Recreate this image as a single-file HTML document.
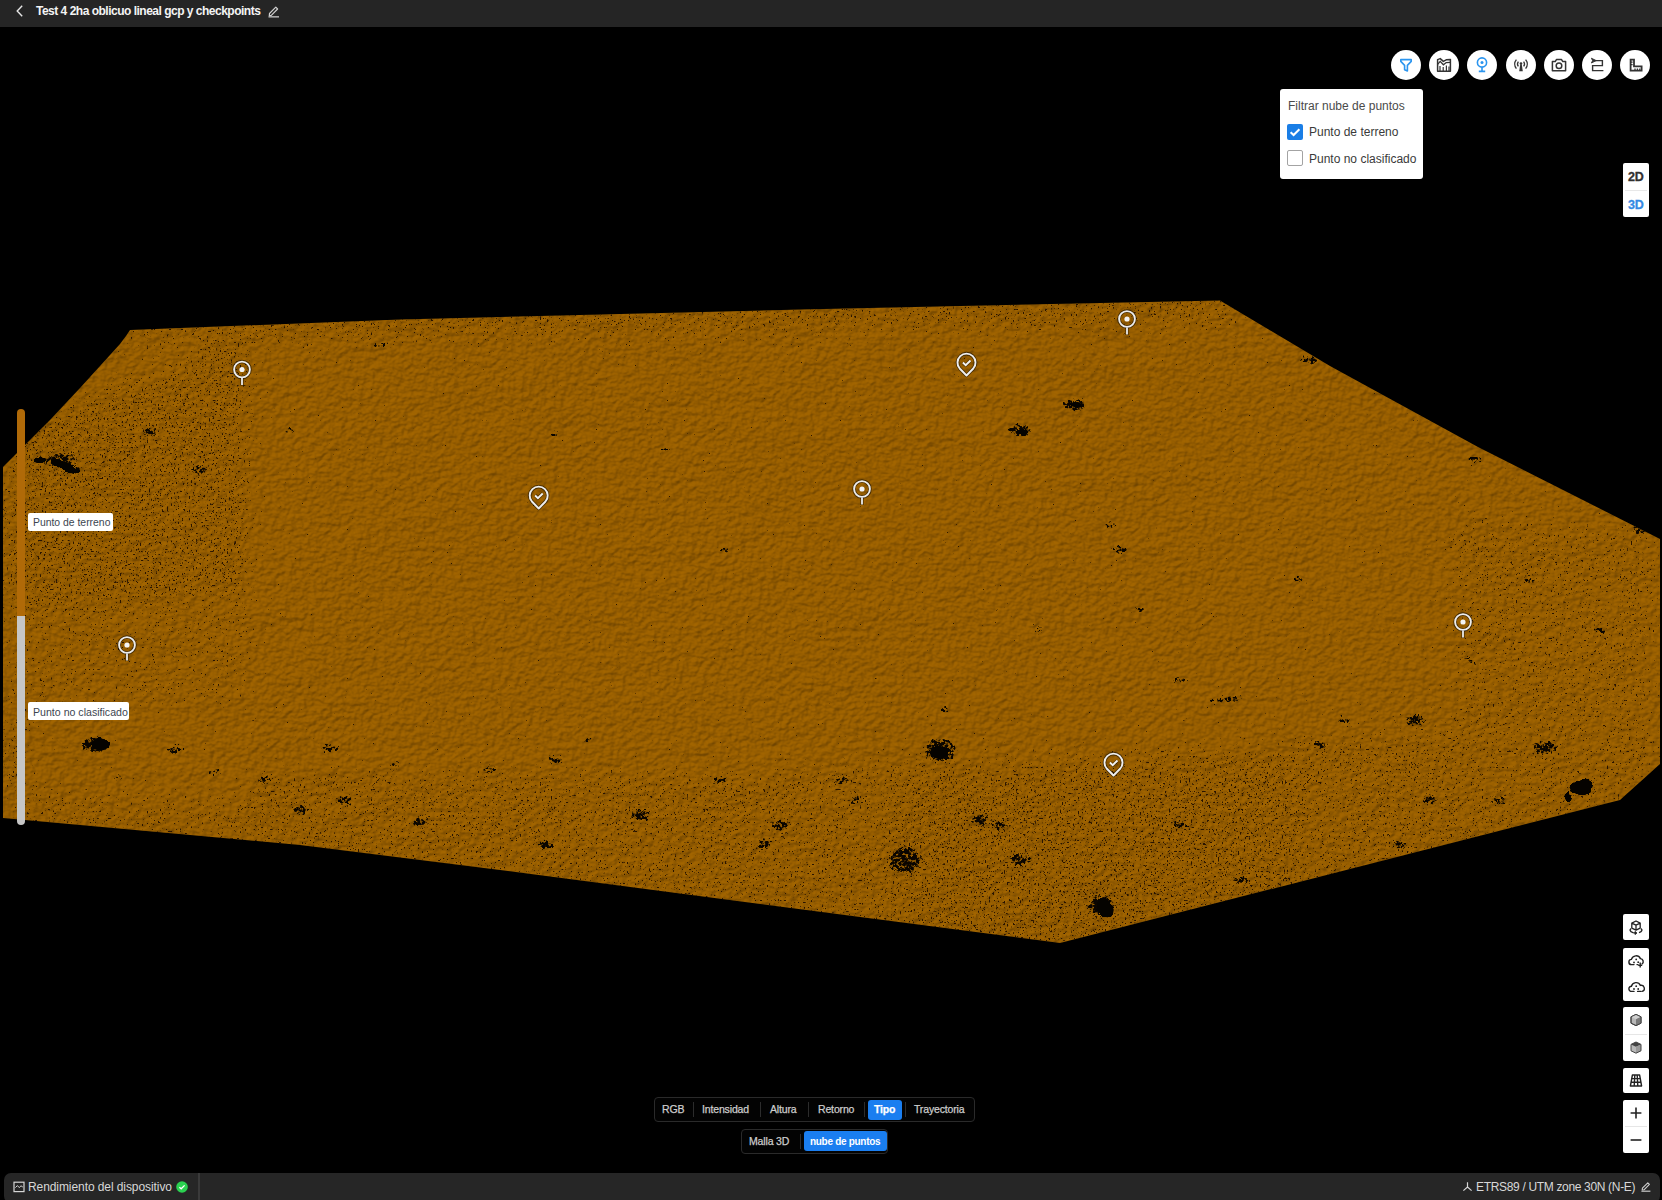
<!DOCTYPE html>
<html><head><meta charset="utf-8">
<style>
*{box-sizing:border-box;margin:0;padding:0}
html,body{width:1662px;height:1200px;overflow:hidden;background:#000;font-family:"Liberation Sans",sans-serif}
.abs{position:absolute}
.m{position:absolute;white-space:nowrap;line-height:1}
#topbar{position:absolute;left:0;top:0;width:1662px;height:27px;background:#252525}
#scene{position:absolute;left:0;top:0}
.tb{position:absolute;top:50px;width:30px;height:30px;border-radius:50%;background:#fff}
.tb svg{position:absolute;left:0;top:0}
#popup{position:absolute;left:1280px;top:89px;width:143px;height:90px;background:#fff;border-radius:3px}
.cb{position:absolute;left:7px;width:16px;height:16px;border-radius:2px}
#dd{position:absolute;left:1623px;top:163px;width:26px;height:54px;background:#fff;border-radius:2px}
.lbl{position:absolute;height:18px;background:#fff;border-radius:2px}
.rc{position:absolute;left:1623px;width:26px;background:#fff;border-radius:2px}
.rc svg{position:absolute;left:0}
#tabs{position:absolute;left:654px;top:1097px;width:321px;height:25px;border:1px solid #2a2a2a;border-radius:4px;background:#030303}
#tabs2{position:absolute;left:741px;top:1129px;width:147px;height:25px;border:1px solid #2a2a2a;border-radius:4px;background:#030303}
.tt{font-size:10.5px;color:#cdcdcd;letter-spacing:-0.15px;margin-top:-1px;margin-left:-1px;-webkit-text-stroke:0.25px}
.sep{position:absolute;width:1px;height:15px;background:#2c2c2c}
#status{position:absolute;left:4px;top:1173px;width:1656px;height:30px;background:#262626;border-radius:7px}
.mk{position:absolute}
</style></head>
<body>
<svg id="scene" width="1662" height="1200" viewBox="0 0 1662 1200">
<defs>
<clipPath id="poly"><polygon points="130,330 400,319.5 800,309.5 1220,300.5 1330,366 1478,447 1660,539 1660,764 1620,800 1060,943 500,870 300,845 3,818 3,467 50,420 80,388 120,344 126,336"/></clipPath>
<filter id="emb" x="0" y="0" width="1662" height="1200" filterUnits="userSpaceOnUse" color-interpolation-filters="sRGB">
  <feTurbulence type="fractalNoise" baseFrequency="0.16 0.2" numOctaves="2" seed="4" result="t1"/>
  <feTurbulence type="fractalNoise" baseFrequency="0.02 0.045" numOctaves="3" seed="9" result="t2"/>
  <feComposite in="t1" in2="t2" operator="arithmetic" k1="0" k2="0.8" k3="0.5" k4="-0.15" result="t"/>
  <feDiffuseLighting in="t" surfaceScale="3" diffuseConstant="1" lighting-color="#ffffff" result="L"><feDistantLight azimuth="235" elevation="50"/></feDiffuseLighting>
  <feColorMatrix in="L" type="matrix" values="0.22 0 0 0 0.42  0.14 0 0 0 0.258  0 0 0 0 0  0 0 0 0 1"/>
</filter>
<filter id="sp" x="0" y="0" width="1662" height="1200" filterUnits="userSpaceOnUse" color-interpolation-filters="sRGB">
  <feGaussianBlur in="SourceGraphic" stdDeviation="10" result="d"/>
  <feTurbulence type="fractalNoise" baseFrequency="0.55" numOctaves="2" seed="7" result="n"/>
  <feComposite in="n" in2="d" operator="arithmetic" k1="0" k2="1" k3="0.5" k4="0" result="s"/>
  <feColorMatrix in="s" type="matrix" values="0 0 0 0 0.16  0 0 0 0 0.08  0 0 0 0 0  12 0 0 0 -8"/>
</filter>
<filter id="bl" x="0" y="0" width="1662" height="1200" filterUnits="userSpaceOnUse" color-interpolation-filters="sRGB">
  <feGaussianBlur in="SourceGraphic" stdDeviation="2.5" result="d"/>
  <feTurbulence type="fractalNoise" baseFrequency="0.35" numOctaves="2" seed="11" result="n"/>
  <feComposite in="n" in2="d" operator="arithmetic" k1="0" k2="1" k3="0.62" k4="0" result="s"/>
  <feColorMatrix in="s" type="matrix" values="0 0 0 0 0.04  0 0 0 0 0.02  0 0 0 0 0  12 0 0 0 -9.4"/>
</filter>
<filter id="bs" x="0" y="0" width="1662" height="1200" filterUnits="userSpaceOnUse" color-interpolation-filters="sRGB">
  <feTurbulence type="fractalNoise" baseFrequency="0.12" numOctaves="2" seed="5" result="n"/>
  <feDisplacementMap in="SourceGraphic" in2="n" scale="6" xChannelSelector="R" yChannelSelector="G" result="dm"/>
  <feColorMatrix in="dm" type="matrix" values="0 0 0 0 0.02  0 0 0 0 0.01  0 0 0 0 0  3 0 0 0 -1.2"/>
</filter>
</defs>
<rect x="0" y="0" width="1662" height="1200" fill="#000"/>
<g clip-path="url(#poly)">
  <rect x="0" y="0" width="1662" height="1200" filter="url(#emb)"/>
  <g filter="url(#sp)">
    <rect x="0" y="0" width="1662" height="1200" fill="rgb(70,70,70)"/>
    <polygon points="0,430 252,330 252,600 0,640" fill="rgb(164,164,164)"/>
    <polygon points="0,600 32,600 32,840 0,840" fill="rgb(160,160,160)"/>
    <polygon points="0,620 252,590 252,700 0,720" fill="rgb(130,130,130)"/>
    <polygon points="250,770 700,770 1300,740 1662,700 1662,1000 250,1000" fill="rgb(150,150,150)"/>
    <polygon points="0,790 250,790 250,1000 0,1000" fill="rgb(138,138,138)"/>
    <polygon points="900,780 1300,760 1300,960 900,960" fill="rgb(166,166,166)"/>
    <polygon points="100,300 1240,280 1240,330 100,350" fill="rgb(150,150,150)"/>
    <polygon points="1450,520 1662,520 1662,820 1450,820" fill="rgb(140,140,140)"/>
  </g>
  <g filter="url(#bl)">
    <rect x="0" y="0" width="1662" height="1200" fill="#000"/>
    <g fill="#fff"><ellipse cx="95" cy="745" rx="16" ry="10"/><ellipse cx="175" cy="750" rx="10" ry="6"/><ellipse cx="215" cy="772" rx="8" ry="5"/><ellipse cx="118" cy="777" rx="6" ry="5"/><ellipse cx="265" cy="780" rx="9" ry="6"/><ellipse cx="330" cy="748" rx="12" ry="6"/><ellipse cx="300" cy="810" rx="10" ry="7"/><ellipse cx="345" cy="800" rx="10" ry="7"/><ellipse cx="395" cy="765" rx="8" ry="5"/><ellipse cx="490" cy="770" rx="9" ry="6"/><ellipse cx="555" cy="760" rx="10" ry="6"/><ellipse cx="590" cy="740" rx="8" ry="5"/><ellipse cx="640" cy="815" rx="12" ry="8"/><ellipse cx="720" cy="780" rx="10" ry="6"/><ellipse cx="780" cy="825" rx="12" ry="7"/><ellipse cx="840" cy="780" rx="10" ry="6"/><ellipse cx="855" cy="800" rx="8" ry="6"/><ellipse cx="905" cy="860" rx="18" ry="16"/><ellipse cx="940" cy="750" rx="18" ry="14"/><ellipse cx="945" cy="710" rx="8" ry="5"/><ellipse cx="1000" cy="825" rx="10" ry="7"/><ellipse cx="1100" cy="905" rx="14" ry="12"/><ellipse cx="1180" cy="825" rx="10" ry="6"/><ellipse cx="1220" cy="700" rx="16" ry="4"/><ellipse cx="1320" cy="745" rx="9" ry="6"/><ellipse cx="1345" cy="720" rx="9" ry="5"/><ellipse cx="1415" cy="720" rx="12" ry="8"/><ellipse cx="1430" cy="800" rx="10" ry="6"/><ellipse cx="1545" cy="748" rx="14" ry="9"/><ellipse cx="1400" cy="845" rx="10" ry="6"/><ellipse cx="60" cy="460" rx="18" ry="8"/><ellipse cx="290" cy="430" rx="8" ry="4"/><ellipse cx="380" cy="345" rx="10" ry="4"/><ellipse cx="555" cy="433" rx="8" ry="4"/><ellipse cx="665" cy="450" rx="6" ry="4"/><ellipse cx="1020" cy="430" rx="14" ry="8"/><ellipse cx="1075" cy="405" rx="14" ry="8"/><ellipse cx="1310" cy="360" rx="12" ry="6"/><ellipse cx="1475" cy="460" rx="10" ry="5"/><ellipse cx="1640" cy="530" rx="10" ry="6"/><ellipse cx="1120" cy="550" rx="10" ry="6"/><ellipse cx="1110" cy="525" rx="8" ry="5"/><ellipse cx="725" cy="550" rx="7" ry="5"/><ellipse cx="1140" cy="610" rx="8" ry="5"/><ellipse cx="1040" cy="630" rx="8" ry="5"/><ellipse cx="1180" cy="680" rx="10" ry="5"/><ellipse cx="1300" cy="580" rx="9" ry="5"/><ellipse cx="1530" cy="580" rx="10" ry="5"/><ellipse cx="1600" cy="630" rx="9" ry="5"/><ellipse cx="150" cy="432" rx="10" ry="6"/><ellipse cx="200" cy="470" rx="10" ry="6"/><ellipse cx="32" cy="520" rx="7" ry="5"/><ellipse cx="420" cy="822" rx="10" ry="7"/><ellipse cx="545" cy="845" rx="10" ry="7"/><ellipse cx="980" cy="820" rx="10" ry="8"/><ellipse cx="1020" cy="860" rx="12" ry="8"/><ellipse cx="1500" cy="800" rx="10" ry="6"/><ellipse cx="1240" cy="880" rx="10" ry="6"/><ellipse cx="764" cy="844" rx="10" ry="7"/><ellipse cx="1470" cy="662" rx="9" ry="5"/><ellipse cx="1232" cy="699" rx="14" ry="5"/></g>
  </g>
  <g filter="url(#bs)">
    <rect x="0" y="0" width="1662" height="1200" fill="#000"/>
    <g fill="#fff"><ellipse cx="65" cy="466" rx="16" ry="4" transform="rotate(22 65 466)"/><ellipse cx="40" cy="460" rx="5" ry="3" transform="rotate(0 40 460)"/><ellipse cx="1105" cy="908" rx="8" ry="11" transform="rotate(-25 1105 908)"/><ellipse cx="1582" cy="787" rx="12" ry="7" transform="rotate(-10 1582 787)"/><ellipse cx="1568" cy="797" rx="3" ry="5" transform="rotate(0 1568 797)"/><ellipse cx="940" cy="752" rx="9" ry="7" transform="rotate(0 940 752)"/><ellipse cx="100" cy="744" rx="9" ry="6" transform="rotate(0 100 744)"/><ellipse cx="1076" cy="404" rx="6" ry="3" transform="rotate(0 1076 404)"/><ellipse cx="1022" cy="432" rx="6" ry="3" transform="rotate(0 1022 432)"/></g>
  </g>
</g>
</svg>

<div id="topbar">
  <svg class="abs" style="left:14px;top:4px" width="12" height="14" viewBox="0 0 12 14"><path d="M8.2 1.8 L3.2 7 L8.2 12.2" fill="none" stroke="#e6e6e6" stroke-width="1.4"/></svg>
  <span class="m" id="title" style="left:36px;top:5px;font-size:12px;font-weight:bold;color:#f4f4f4;letter-spacing:-0.5px">Test 4 2ha oblicuo lineal gcp y checkpoints</span>
  <svg class="abs" style="left:266px;top:4px" width="14" height="14" viewBox="0 0 14 14"><path d="M3.5 9.5 L9.8 3.2 L11.6 5 L5.3 11.3 L3.3 11.6 Z" fill="none" stroke="#d0d0d0" stroke-width="1.2" stroke-linejoin="round"/><rect x="2.5" y="12.2" width="10.5" height="1.3" fill="#c8c8c8"/></svg>
</div>

<!-- markers -->
<svg class="mk" style="left:0;top:0" width="1662" height="1200" viewBox="0 0 1662 1200">
  <defs>
    <g id="pin">
      <circle cx="0" cy="0" r="8" fill="none" stroke="#000" stroke-opacity="0.5" stroke-width="3.6"/>
      <line x1="0" y1="8" x2="0" y2="16" stroke="#000" stroke-opacity="0.5" stroke-width="3.4"/>
      <circle cx="0" cy="0" r="7.9" fill="none" stroke="#ececec" stroke-width="1.9"/>
      <circle cx="0" cy="0" r="2.6" fill="#f4f4f4"/>
      <line x1="0" y1="8.5" x2="0" y2="15.6" stroke="#ececec" stroke-width="1.8"/>
    </g>
    <g id="chk">
      <path d="M0 12 L-6.8 5 A9 9 0 1 1 6.8 5 Z" fill="none" stroke="#000" stroke-opacity="0.5" stroke-width="3.6" stroke-linejoin="round"/>
      <path d="M0 12 L-6.8 5 A9 9 0 1 1 6.8 5 Z" fill="none" stroke="#eeeeee" stroke-width="1.9" stroke-linejoin="round"/>
      <path d="M-3.6 -1 L-0.8 1.6 L4 -3" fill="none" stroke="#000" stroke-opacity="0.4" stroke-width="3.4"/>
      <path d="M-3.6 -1 L-0.8 1.6 L4 -3" fill="none" stroke="#f2f2f2" stroke-width="1.9"/>
    </g>
  </defs>
  <use href="#pin" x="242" y="369.5"/>
  <use href="#pin" x="1127" y="319"/>
  <use href="#pin" x="862" y="489"/>
  <use href="#pin" x="127" y="645"/>
  <use href="#pin" x="1463" y="622"/>
  <use href="#chk" x="966.5" y="363.5"/>
  <use href="#chk" x="538.7" y="496.5"/>
  <use href="#chk" x="1113.5" y="763.5"/>
</svg>

<!-- toolbar -->
<div class="tb" style="left:1391px"><svg width="30" height="30" viewBox="0 0 30 30"><path d="M9.8 9.6 H20.2 V11.4 L16.4 15.4 V21 L13.6 19.8 V15.4 L9.8 11.4 Z" fill="none" stroke="#2b95ef" stroke-width="1.6" stroke-linejoin="round"/></svg></div>
<div class="tb" style="left:1429.2px"><svg width="30" height="30" viewBox="0 0 30 30"><path d="M8.6 21.2 V9.6 L11.2 8.6 L14.4 11.4 L17.2 9.8 L21.4 9.4 V21.2 Z" fill="none" stroke="#333" stroke-width="1.5" stroke-linejoin="round"/><path d="M8.6 14.4 L11.2 11.4 L14.4 14.8 L17.2 12.6 L21.4 12.4" fill="none" stroke="#333" stroke-width="1.3"/><path d="M11 21 V16 M14.2 21 V17 M17.4 21 V15.6 M20 21 V16.4" stroke="#333" stroke-width="1.2"/></svg></div>
<div class="tb" style="left:1467.4px"><svg width="30" height="30" viewBox="0 0 30 30"><circle cx="15" cy="12.5" r="4.6" fill="none" stroke="#2b95ef" stroke-width="1.6"/><circle cx="15" cy="12.5" r="1.5" fill="#2b95ef"/><path d="M15 17.2 V21 M11.8 21.4 H18.2" stroke="#2b95ef" stroke-width="1.6"/></svg></div>
<div class="tb" style="left:1505.5px"><svg width="30" height="30" viewBox="0 0 30 30"><path d="M10.4 9.6 A7 7 0 0 0 10.4 18.6 M19.6 9.6 A7 7 0 0 1 19.6 18.6 M12.4 11.6 A4 4 0 0 0 12.4 16.4 M17.6 11.6 A4 4 0 0 1 17.6 16.4" fill="none" stroke="#333" stroke-width="1.4"/><circle cx="15" cy="13.6" r="1.3" fill="#333"/><path d="M14.2 14.6 L13.2 21.2 H16.8 L15.8 14.6 Z" fill="#333"/></svg></div>
<div class="tb" style="left:1543.8px"><svg width="30" height="30" viewBox="0 0 30 30"><path d="M8.4 11.6 H11.2 L12.6 9.4 H17.4 L18.8 11.6 H21.6 V20.8 H8.4 Z" fill="none" stroke="#333" stroke-width="1.5" stroke-linejoin="round"/><circle cx="15" cy="15.8" r="2.8" fill="none" stroke="#333" stroke-width="1.5"/></svg></div>
<div class="tb" style="left:1582px"><svg width="30" height="30" viewBox="0 0 30 30"><path d="M9.4 8.2 L14.2 10.6 L9.4 13 L10.6 10.6 Z" fill="#333" stroke="#333" stroke-width="0.9" stroke-linejoin="round"/><path d="M12.8 10.6 H20.4 V15.6 H10.6 V20.6 H21.4" fill="none" stroke="#333" stroke-width="1.4"/></svg></div>
<div class="tb" style="left:1620.1px"><svg width="30" height="30" viewBox="0 0 30 30"><path d="M10.6 9.6 H14 V16.4 H21.6 V20.6 H10.6 Z" fill="none" stroke="#333" stroke-width="1.8"/><path d="M10.6 12.2 H12.6 M10.6 14.6 H12.6 M15 20.6 V18.6 M17.4 20.6 V18.6 M19.8 20.6 V18.6" stroke="#333" stroke-width="1.3"/></svg></div>

<div id="popup">
  <span class="m" id="ph" style="left:8px;top:11px;font-size:12px;color:#4a4a4a">Filtrar nube de puntos</span>
  <div class="cb" style="top:35px;background:#1a7ee6"><svg width="16" height="16" viewBox="0 0 16 16" style="position:absolute;left:0;top:0"><path d="M3.6 8.2 L6.6 11 L12.4 5.2" fill="none" stroke="#fff" stroke-width="2"/></svg></div>
  <span class="m" id="p1" style="left:29px;top:37px;font-size:12px;color:#3a3a3a">Punto de terreno</span>
  <div class="cb" style="top:61px;border:1.5px solid #a3a3a3"></div>
  <span class="m" id="p2" style="left:29px;top:64px;font-size:12px;color:#3a3a3a">Punto no clasificado</span>
</div>

<div id="dd">
  <span class="m" style="left:5px;top:8px;font-size:12.5px;font-weight:bold;color:#303030;letter-spacing:-0.2px;-webkit-text-stroke:0.3px">2D</span>
  <div class="abs" style="left:2px;top:27px;width:22px;height:1px;background:#e8e8e8"></div>
  <span class="m" style="left:5px;top:36px;font-size:12.5px;font-weight:bold;color:#3389e4;letter-spacing:-0.2px;-webkit-text-stroke:0.3px">3D</span>
</div>

<!-- legend -->
<div class="abs" style="left:17px;top:409px;width:8px;height:216px;border-radius:4px 4px 0 0;background:#b06a08"></div>
<div class="abs" style="left:17px;top:616px;width:8px;height:209px;border-radius:0 0 4px 4px;background:#c6c6c6"></div>
<div class="lbl" style="left:28px;top:513px;width:85px"><span class="m" id="l1" style="left:5px;top:5px;font-size:10.4px;color:#3c4550">Punto de terreno</span></div>
<div class="lbl" style="left:28px;top:702px;width:101px"><span class="m" id="l2" style="left:5px;top:5px;font-size:10.6px;color:#3c4550">Punto no clasificado</span></div>

<!-- right controls -->
<div class="rc" style="top:914px;height:26px"><svg style="top:0" width="26" height="26" viewBox="0 0 26 26">
  <path d="M13 7 L17.2 9.1 V14.1 L13 16.2 L8.8 14.1 V9.1 Z M8.8 9.1 L13 11.2 L17.2 9.1 M13 11.2 V16.2" fill="none" stroke="#222" stroke-width="1.3" stroke-linejoin="round"/>
  <path d="M8.2 14.6 C6.4 15.4 6.6 17.6 10 18.6 L12.6 19" fill="none" stroke="#222" stroke-width="1.4"/>
  <path d="M12 17.4 L14 19 L12 20.6 Z" fill="#222" stroke="#222" stroke-width="0.8"/>
  <path d="M17.8 14.6 C19.6 15.4 19.4 17.6 16 18.6" fill="none" stroke="#222" stroke-width="1.4"/>
</svg></div>
<div class="rc" style="top:948px;height:53px"><svg style="top:0" width="26" height="53" viewBox="0 0 26 53">
  <path d="M11 16.6 H8.6 A2.6 2.6 0 0 1 8.4 11.4 A4.8 4.8 0 0 1 17.4 10.6 A3 3 0 0 1 19 16 M14 16.6 H15" fill="none" stroke="#222" stroke-width="1.4" stroke-linecap="round"/>
  <circle cx="13.2" cy="11.4" r="0.9" fill="#222"/><circle cx="11" cy="14.4" r="0.9" fill="#222"/><circle cx="15.2" cy="14.2" r="0.9" fill="#222"/>
  <path d="M17.2 14.4 V19.6 M15.2 17.4 H19.2" stroke="#222" stroke-width="1.4"/>
  <path d="M11 43.4 H8.6 A2.6 2.6 0 0 1 8.4 38.2 A4.8 4.8 0 0 1 17.4 37.4 A3 3 0 0 1 19 43.4 M14.6 43.4 H17.6" fill="none" stroke="#222" stroke-width="1.4" stroke-linecap="round"/>
  <circle cx="13.2" cy="38.2" r="0.9" fill="#222"/><circle cx="11" cy="41" r="0.9" fill="#222"/><circle cx="15.2" cy="41" r="0.9" fill="#222"/>
</svg></div>
<div class="rc" style="top:1007px;height:54px"><svg style="top:0" width="26" height="54" viewBox="0 0 26 54">
  <path d="M13 7.4 L18 9.8 V16.2 L13 18.6 L8 16.2 V9.8 Z" fill="#b8b8b8" stroke="#444" stroke-width="1"/>
  <path d="M8 9.8 L13 12.2 L18 9.8 L13 7.4 Z" fill="#d0d0d0"/>
  <path d="M13 12.2 L18 9.8 V16.2 L13 18.6 Z" fill="#7a7a7a"/>
  <path d="M13 7.4 L18 9.8 V16.2 L13 18.6 L8 16.2 V9.8 Z" fill="none" stroke="#444" stroke-width="1"/>
  <rect x="2" y="27" width="22" height="1" fill="#e6e6e6"/>
  <path d="M13 35 L18 37.4 V43.8 L13 46.2 L8 43.8 V37.4 Z" fill="#b8b8b8"/>
  <path d="M8 37.4 L13 39.8 L18 37.4 L13 35 Z" fill="#444"/>
  <path d="M13 39.8 L18 37.4 V43.8 L13 46.2 Z" fill="#999"/>
  <path d="M13 35 L18 37.4 V43.8 L13 46.2 L8 43.8 V37.4 Z" fill="none" stroke="#444" stroke-width="1"/>
</svg></div>
<div class="rc" style="top:1068px;height:25px"><svg style="top:0" width="26" height="25" viewBox="0 0 26 25">
  <path d="M9.4 7 H16.6 L18.6 18 H7.4 Z M8.6 10.6 H17.4 M8 14.3 H18 M11.8 7 L11.2 18 M14.2 7 L14.8 18" fill="none" stroke="#222" stroke-width="1.4" stroke-linejoin="round"/>
</svg></div>
<div class="rc" style="top:1100px;height:53px"><svg style="top:0" width="26" height="53" viewBox="0 0 26 53">
  <path d="M13 7.6 V18.4 M7.6 13 H18.4" stroke="#222" stroke-width="1.6"/>
  <rect x="2" y="26" width="22" height="1" fill="#e6e6e6"/>
  <path d="M7.6 40 H18.4" stroke="#222" stroke-width="1.6"/>
</svg></div>

<!-- tabs -->
<div id="tabs">
  <span class="m tt" style="left:8px;top:7px">RGB</span>
  <div class="sep" style="left:38px;top:4px"></div>
  <span class="m tt" style="left:48px;top:7px">Intensidad</span>
  <div class="sep" style="left:105px;top:4px"></div>
  <span class="m tt" style="left:116px;top:7px">Altura</span>
  <div class="sep" style="left:153px;top:4px"></div>
  <span class="m tt" style="left:164px;top:7px">Retorno</span>
  <div class="sep" style="left:209px;top:4px"></div>
  <div class="abs" style="left:213px;top:2px;width:34px;height:20px;background:#1a7ef0;border-radius:3px"></div>
  <span class="m tt" style="left:220px;top:7px;color:#fff;font-weight:bold">Tipo</span>
  <div class="sep" style="left:250px;top:4px"></div>
  <span class="m tt" style="left:260px;top:7px">Trayectoria</span>
</div>
<div id="tabs2">
  <span class="m tt" style="left:8px;top:6.5px">Malla 3D</span>
  <div class="sep" style="left:58px;top:4px"></div>
  <div class="abs" style="left:62px;top:1px;width:83px;height:20px;background:#1a7ef0;border-radius:3px"></div>
  <span class="m tt" style="left:69px;top:7.5px;color:#fff;font-weight:bold;-webkit-text-stroke:0;font-size:10px;letter-spacing:-0.3px">nube de puntos</span>
</div>

<div id="status">
  <svg class="abs" style="left:9px;top:8px" width="12" height="12" viewBox="0 0 12 12"><rect x="1" y="1.2" width="10" height="9.4" fill="none" stroke="#d6d6d6" stroke-width="1.2"/><path d="M2.4 6.6 L4.4 4.6 L6.2 6.6 L8 4.8 L9.8 6" fill="none" stroke="#d6d6d6" stroke-width="1"/></svg>
  <span class="m" id="st1" style="left:24px;top:8px;font-size:12px;color:#d8d8d8;letter-spacing:-0.08px">Rendimiento del dispositivo</span>
  <svg class="abs" style="left:171.5px;top:7.5px" width="12" height="12" viewBox="0 0 12 12"><circle cx="6" cy="6" r="5.8" fill="#2bd150"/><path d="M3.4 6.2 L5.2 7.8 L8.6 4.4" fill="none" stroke="#fff" stroke-width="1.3"/></svg>
  <div class="abs" style="left:194px;top:0;width:1.5px;height:27px;background:#3a3a3a"></div>
  <svg class="abs" style="left:1458px;top:8px" width="11" height="11" viewBox="0 0 11 11"><path d="M5.5 1.2 V6 L1.4 9.6 M5.5 6 L9.6 9.6" fill="none" stroke="#d6d6d6" stroke-width="1.2"/></svg>
  <span class="m" id="st2" style="left:1472px;top:8px;font-size:12px;color:#d8d8d8;letter-spacing:-0.33px">ETRS89 / UTM zone 30N (N-E)</span>
  <svg class="abs" style="left:1636px;top:7px" width="12" height="12" viewBox="0 0 12 12"><path d="M2.4 8.2 L7.8 2.8 L9.4 4.4 L4 9.8 L2.2 10 Z" fill="none" stroke="#d0d0d0" stroke-width="1.1" stroke-linejoin="round"/><rect x="1.4" y="10.6" width="9" height="1.2" fill="#c8c8c8"/></svg>
</div>
</body></html>
